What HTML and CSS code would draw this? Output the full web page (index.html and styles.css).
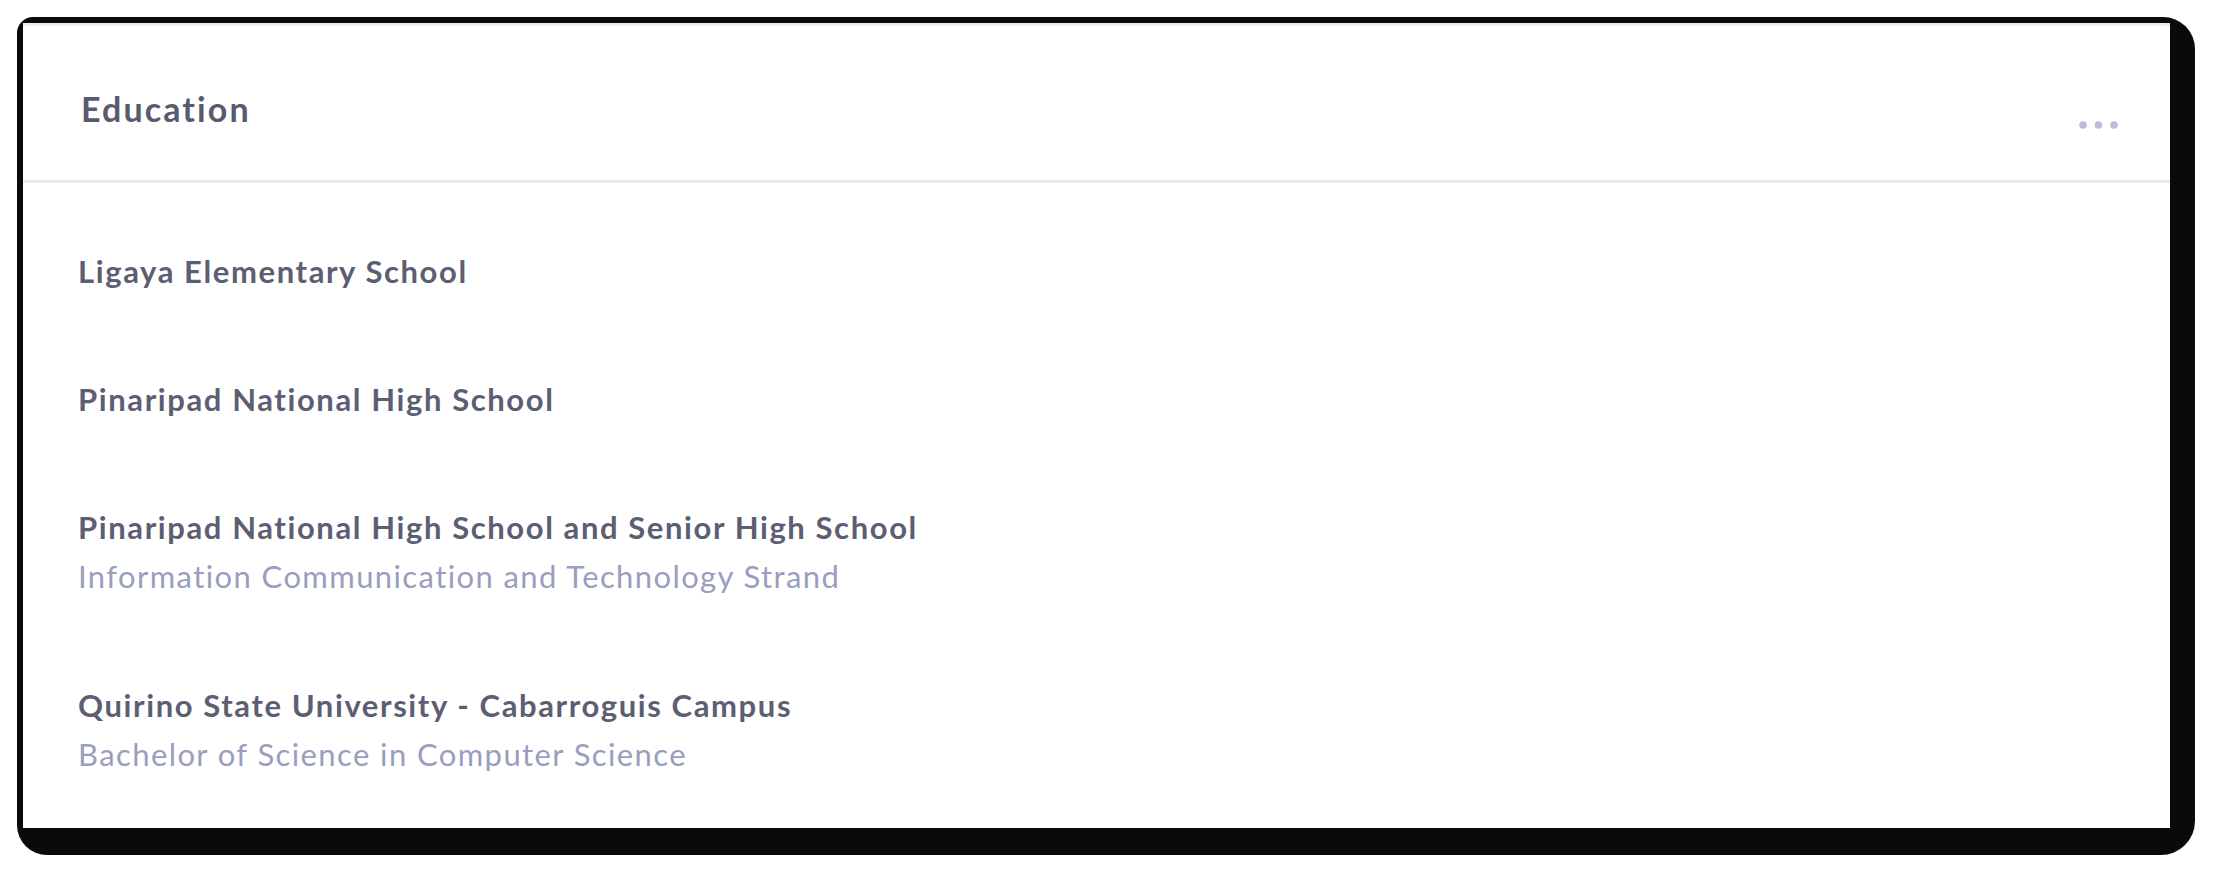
FILE: index.html
```html
<!DOCTYPE html>
<html lang="en">
<head>
<meta charset="utf-8">
<title>Education</title>
<link rel="stylesheet" href="styles.css">
</head>
<body>
<div class="page">
  <div class="frame">
    <section class="card">
      <header class="card-header">
        <h2 class="card-title">Education</h2>
        <svg class="dots" width="40" height="8" viewBox="0 0 40 8" aria-hidden="true">
          <circle cx="4" cy="4" r="3.8"/>
          <circle cx="19.5" cy="4" r="3.8"/>
          <circle cx="35" cy="4" r="3.8"/>
        </svg>
      </header>
      <div class="card-body">
        <div class="item">
          <div class="item-title">Ligaya Elementary School</div>
        </div>
        <div class="item">
          <div class="item-title">Pinaripad National High School</div>
        </div>
        <div class="item">
          <div class="item-title">Pinaripad National High School and Senior High School</div>
          <div class="item-sub">Information Communication and Technology Strand</div>
        </div>
        <div class="item">
          <div class="item-title">Quirino State University - Cabarroguis Campus</div>
          <div class="item-sub">Bachelor of Science in Computer Science</div>
        </div>
      </div>
    </section>
  </div>
</div>
</body>
</html>
```

FILE: styles.css
```css
* { box-sizing: border-box; }

html, body {
  margin: 0;
  padding: 0;
  background: #ffffff;
  font-family: Lato, "Liberation Sans", sans-serif;
}

.page {
  padding: 17px 18px 17px 17px;
}

.frame {
  background: #0a0a0a;
  width: 2178px;
  height: 838px;
  padding: 6px 25px 27px 6px;
  border-radius: 16px 32px 34px 30px;
}

.card {
  background: #ffffff;
  height: 100%;
  border-top: 3px solid #e8ecf4;
  display: flex;
  flex-direction: column;
}

.card-header {
  height: 157px;
  padding: 11px 51px 0 58px;
  border-bottom: 3px solid #e6eaf3;
  display: flex;
  align-items: center;
  justify-content: space-between;
}

.card-title {
  margin: 0;
  font-size: 34px;
  font-weight: 700;
  letter-spacing: 2.1px;
  color: #585a70;
  line-height: 40px;
}

.dots {
  display: block;
  margin-top: 32px;
  fill: #b9bdd7;
}

.card-body {
  padding: 64px 55px 0 55px;
  display: flex;
  flex-direction: column;
  gap: 80px;
}

.item-title {
  font-size: 31px;
  font-weight: 700;
  letter-spacing: 1.6px;
  color: #5c5e72;
  line-height: 48px;
  white-space: nowrap;
}

.item-sub {
  font-size: 31px;
  font-weight: 400;
  letter-spacing: 1.4px;
  color: #999ec0;
  line-height: 50px;
  white-space: nowrap;
}
```
